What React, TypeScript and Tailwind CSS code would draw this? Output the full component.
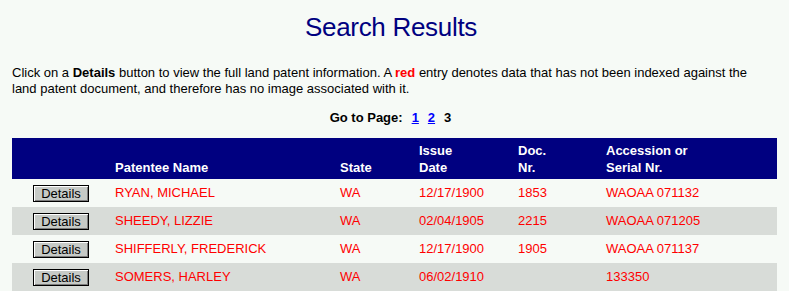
import React from "react";

const rows = [
  { name: "RYAN, MICHAEL", state: "WA", date: "12/17/1900", doc: "1853", acc: "WAOAA 071132" },
  { name: "SHEEDY, LIZZIE", state: "WA", date: "02/04/1905", doc: "2215", acc: "WAOAA 071205" },
  { name: "SHIFFERLY, FREDERICK", state: "WA", date: "12/17/1900", doc: "1905", acc: "WAOAA 071137" },
  { name: "SOMERS, HARLEY", state: "WA", date: "06/02/1910", doc: "", acc: "133350" },
];

export default function App() {
  return (
    <div
      className="w-[789px] h-[291px] overflow-hidden bg-[#f6faf6] px-[12px]"
      style={{ fontFamily: '"Liberation Sans", Arial, sans-serif' }}
    >
      <div className="pt-[14px] pr-[7px] text-center text-[26px] leading-[26px] tracking-[-0.3px] text-[#000080]">
        Search Results
      </div>
      <p className="mt-[25px] pr-[20px] text-[13px] leading-[16px] text-black">
        Click on a <b>Details</b> button to view the full land patent information. A{" "}
        <b className="text-[#ff0000]">red</b> entry denotes data that has not been indexed against the land
        patent document, and therefore has no image associated with it.
      </p>
      <div className="mt-[13px] flex justify-center pr-[8px] text-[13px] leading-[16px] font-bold text-black">
        <span>Go to Page:</span>
        <a className="ml-[9px] text-[#0000ff] underline" href="#">1</a>
        <a className="ml-[9px] text-[#0000ff] underline" href="#">2</a>
        <span className="ml-[9px]">3</span>
      </div>
      <div className="mt-[12px] w-[765px]">
        <div className="grid h-[41px] grid-cols-[103px_225px_79px_99px_88px_171px] items-end bg-[#000080] pb-[3px] text-[13px] leading-[17px] font-bold text-white">
          <div />
          <div>Patentee Name</div>
          <div>State</div>
          <div>Issue<br />Date</div>
          <div>Doc.<br />Nr.</div>
          <div>Accession or<br />Serial Nr.</div>
        </div>
        {rows.map((r, i) => (
          <div
            key={i}
            className={`grid h-[28px] grid-cols-[103px_225px_79px_99px_88px_171px] items-center text-[13px] leading-[16px] text-[#ff0000] ${
              i % 2 === 1 ? "bg-[#d8dcd8]" : "bg-[#f6faf6]"
            }`}
          >
            <div className="flex pl-[21px]">
              <button className="h-[17px] w-[56px] border border-black bg-[#c6cac6] text-[13px] leading-[13px] text-black shadow-[inset_1px_1px_0_#ffffff,inset_-1px_-1px_0_#7c7c7c]">
                Details
              </button>
            </div>
            <div>{r.name}</div>
            <div>{r.state}</div>
            <div>{r.date}</div>
            <div>{r.doc}</div>
            <div>{r.acc}</div>
          </div>
        ))}
      </div>
    </div>
  );
}
